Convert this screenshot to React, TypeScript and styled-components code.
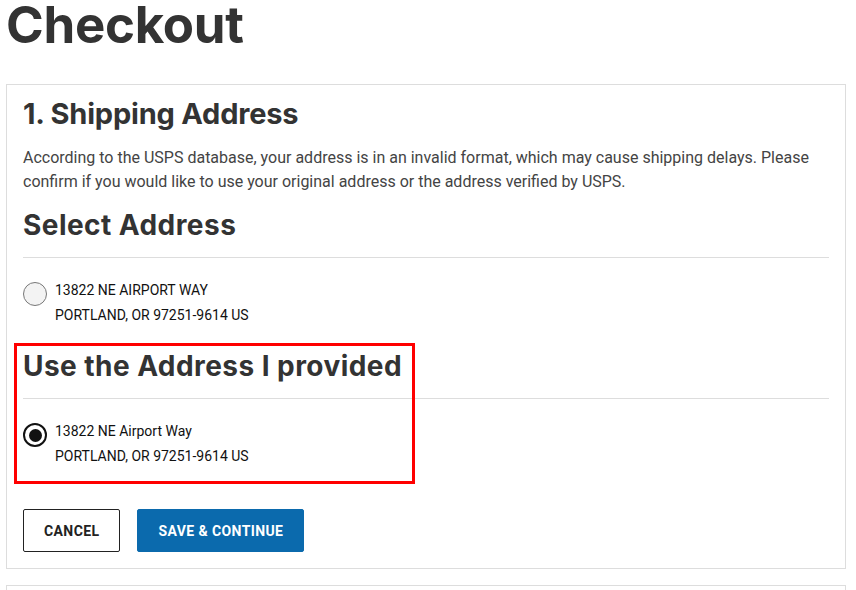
import React from "react";
import styled, { createGlobalStyle } from "styled-components";

const Global = createGlobalStyle`
  html, body { margin: 0; padding: 0; background: #fff; }
  body { font-family: Roboto, "Liberation Sans", sans-serif; color: #333; }
  * { box-sizing: border-box; }
`;

const Page = styled.div`
  padding: 0 10px 0 6px;
`;

const Title = styled.h1`
  margin: 0 0 34px;
  font-family: Inter, "Liberation Sans", sans-serif;
  font-weight: 700;
  font-size: 51px;
  line-height: 50px;
  color: #333;
  letter-spacing: -0.3px;
`;

const Card = styled.section`
  border: 1px solid #ddd;
  padding: 11px 16px 16px;
  margin-bottom: 16px;
`;

const EmptyCard = styled(Card)`
  height: 40px;
`;

const StepTitle = styled.h2`
  margin: 0 0 14px;
  font-family: Inter, "Liberation Sans", sans-serif;
  font-weight: 700;
  font-size: 29px;
  line-height: 36px;
  letter-spacing: -0.2px;
  color: #333;
`;

const Notice = styled.p`
  margin: 0 0 13px;
  font-size: 16px;
  line-height: 24px;
  color: #444;
`;

const AddressGroup = styled.div`
  position: relative;
`;

const Highlight = styled.div`
  position: absolute;
  left: -9px;
  top: -5px;
  width: 401px;
  height: 141px;
  border: 3px solid #f00;
  pointer-events: none;
`;

const GroupTitle = styled.h3`
  margin: 0;
  padding-bottom: 14px;
  border-bottom: 1px solid #ddd;
  font-family: Inter, "Liberation Sans", sans-serif;
  font-weight: 700;
  font-size: 28px;
  line-height: 36px;
  letter-spacing: 0.45px;
  color: #333;
`;

const Option = styled.label`
  display: flex;
  align-items: flex-start;
  gap: 8px;
  padding: 20px 0;
  cursor: pointer;
`;

const Radio = styled.span<{ $checked?: boolean }>`
  flex: none;
  width: 24px;
  height: 24px;
  margin-top: 4px;
  border-radius: 50%;
  border: ${(p) => (p.$checked ? "2.5px solid #111" : "1px solid #777")};
  background: ${(p) => (p.$checked ? "#fff" : "#f3f3f3")};
  display: flex;
  align-items: center;
  justify-content: center;
  &::after {
    content: "";
    display: ${(p) => (p.$checked ? "block" : "none")};
    width: 13px;
    height: 13px;
    border-radius: 50%;
    background: #111;
  }
`;

const AddressText = styled.div`
  font-size: 14px;
  line-height: 25px;
  color: #111;
`;

const Actions = styled.div`
  display: flex;
  gap: 17px;
  margin-top: 20px;
`;

const Button = styled.button<{ $primary?: boolean }>`
  height: 43px;
  padding: 0 20px;
  border-radius: 2px;
  font-family: Roboto, "Liberation Sans", sans-serif;
  font-weight: 700;
  font-size: 14px;
  letter-spacing: 0.4px;
  text-transform: uppercase;
  cursor: pointer;
  border: 1px solid ${(p) => (p.$primary ? "#0b6aad" : "#222")};
  background: ${(p) => (p.$primary ? "#0b6aad" : "#fff")};
  color: ${(p) => (p.$primary ? "#fff" : "#222")};
`;

function AddressOption({
  line1,
  line2,
  checked,
}: {
  line1: string;
  line2: string;
  checked?: boolean;
}) {
  return (
    <Option>
      <Radio $checked={checked} />
      <AddressText>
        <div>{line1}</div>
        <div>{line2}</div>
      </AddressText>
    </Option>
  );
}

export default function App() {
  return (
    <Page>
      <Global />
      <Title>Checkout</Title>
      <Card>
        <StepTitle>1. Shipping Address</StepTitle>
        <Notice>
          According to the USPS database, your address is in an invalid format, which may cause
          shipping delays. Please confirm if you would like to use your original address or the
          address verified by USPS.
        </Notice>
        <AddressGroup>
          <GroupTitle>Select Address</GroupTitle>
          <AddressOption line1="13822 NE AIRPORT WAY" line2="PORTLAND, OR 97251-9614 US" />
        </AddressGroup>
        <AddressGroup>
          <GroupTitle>Use the Address I provided</GroupTitle>
          <AddressOption line1="13822 NE Airport Way" line2="PORTLAND, OR 97251-9614 US" checked />
          <Highlight />
        </AddressGroup>
        <Actions>
          <Button>Cancel</Button>
          <Button $primary>Save &amp; Continue</Button>
        </Actions>
      </Card>
      <EmptyCard />
    </Page>
  );
}
